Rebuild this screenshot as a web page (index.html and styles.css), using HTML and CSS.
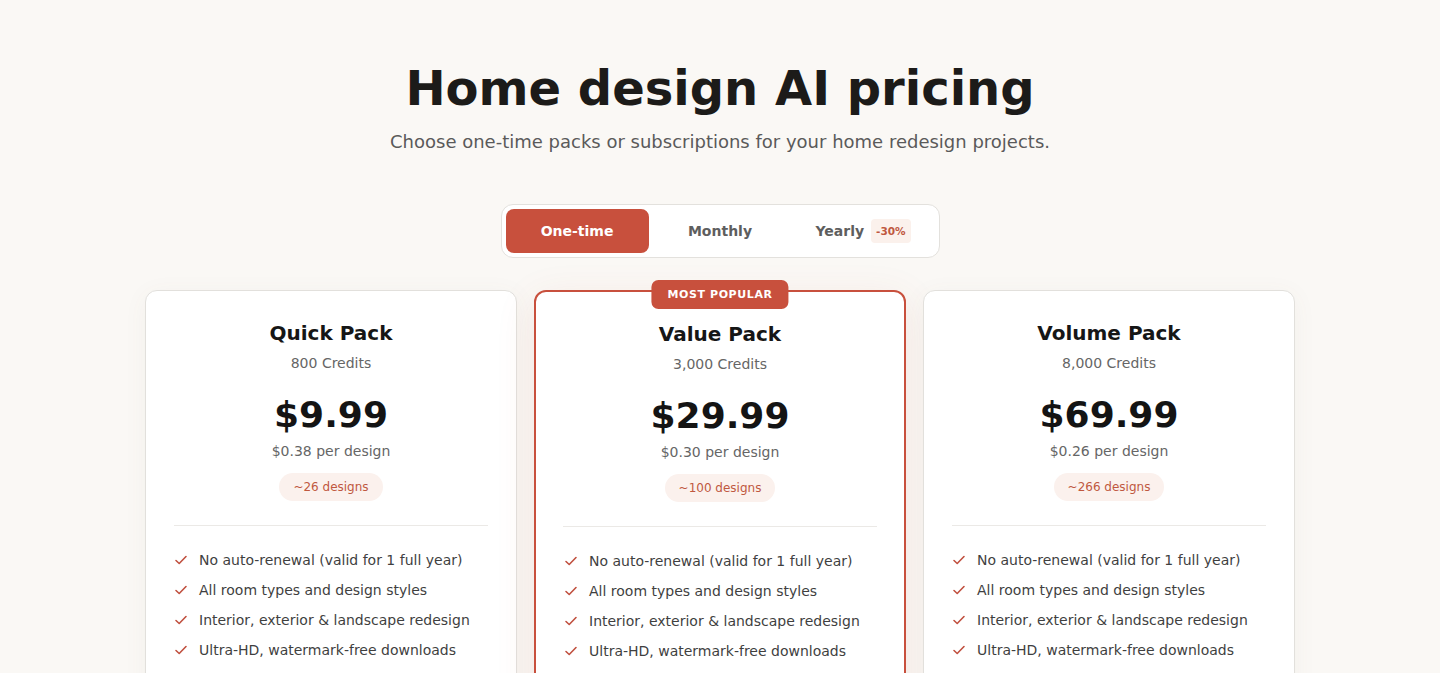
FILE: index.html
```html
<!DOCTYPE html>
<html lang="en">
<head>
<meta charset="utf-8">
<title>Home design AI pricing</title>
<link rel="stylesheet" href="styles.css">
</head>
<body>
<main class="page">
  <h1 class="title">Home design AI pricing</h1>
  <p class="subtitle">Choose one-time packs or subscriptions for your home redesign projects.</p>

  <div class="toggle">
    <button class="tab active">One-time</button>
    <button class="tab">Monthly</button>
    <button class="tab">Yearly <span class="save">-30%</span></button>
  </div>

  <section class="cards">
    <article class="card">
      <h2 class="name">Quick Pack</h2>
      <div class="credits">800 Credits</div>
      <div class="price">$9.99</div>
      <div class="per">$0.38 per design</div>
      <span class="pill">~26 designs</span>
      <hr class="divider">
      <ul class="features">
        <li><svg class="check" viewBox="0 0 14 14"><path d="M2 7.5l3.2 3L12 3.5"/></svg>No auto-renewal (valid for 1 full year)</li>
        <li><svg class="check" viewBox="0 0 14 14"><path d="M2 7.5l3.2 3L12 3.5"/></svg>All room types and design styles</li>
        <li><svg class="check" viewBox="0 0 14 14"><path d="M2 7.5l3.2 3L12 3.5"/></svg>Interior, exterior &amp; landscape redesign</li>
        <li><svg class="check" viewBox="0 0 14 14"><path d="M2 7.5l3.2 3L12 3.5"/></svg>Ultra-HD, watermark-free downloads</li>
      </ul>
    </article>

    <article class="card popular">
      <span class="badge">MOST POPULAR</span>
      <h2 class="name">Value Pack</h2>
      <div class="credits">3,000 Credits</div>
      <div class="price">$29.99</div>
      <div class="per">$0.30 per design</div>
      <span class="pill">~100 designs</span>
      <hr class="divider">
      <ul class="features">
        <li><svg class="check" viewBox="0 0 14 14"><path d="M2 7.5l3.2 3L12 3.5"/></svg>No auto-renewal (valid for 1 full year)</li>
        <li><svg class="check" viewBox="0 0 14 14"><path d="M2 7.5l3.2 3L12 3.5"/></svg>All room types and design styles</li>
        <li><svg class="check" viewBox="0 0 14 14"><path d="M2 7.5l3.2 3L12 3.5"/></svg>Interior, exterior &amp; landscape redesign</li>
        <li><svg class="check" viewBox="0 0 14 14"><path d="M2 7.5l3.2 3L12 3.5"/></svg>Ultra-HD, watermark-free downloads</li>
      </ul>
    </article>

    <article class="card">
      <h2 class="name">Volume Pack</h2>
      <div class="credits">8,000 Credits</div>
      <div class="price">$69.99</div>
      <div class="per">$0.26 per design</div>
      <span class="pill">~266 designs</span>
      <hr class="divider">
      <ul class="features">
        <li><svg class="check" viewBox="0 0 14 14"><path d="M2 7.5l3.2 3L12 3.5"/></svg>No auto-renewal (valid for 1 full year)</li>
        <li><svg class="check" viewBox="0 0 14 14"><path d="M2 7.5l3.2 3L12 3.5"/></svg>All room types and design styles</li>
        <li><svg class="check" viewBox="0 0 14 14"><path d="M2 7.5l3.2 3L12 3.5"/></svg>Interior, exterior &amp; landscape redesign</li>
        <li><svg class="check" viewBox="0 0 14 14"><path d="M2 7.5l3.2 3L12 3.5"/></svg>Ultra-HD, watermark-free downloads</li>
      </ul>
    </article>
  </section>
</main>
</body>
</html>
```

FILE: styles.css
```css
* { box-sizing: border-box; }
html, body {
  margin: 0;
  padding: 0;
  background: #faf8f5;
  font-family: "DejaVu Sans", sans-serif;
  color: #1a1a1a;
  overflow: hidden;
}
.page {
  display: flex;
  flex-direction: column;
  align-items: center;
  padding-top: 59px;
}
.title {
  margin: 0;
  font-size: 48px;
  line-height: 58px;
  font-weight: 700;
  color: #1c1b19;
}
.subtitle {
  margin: 11px 0 0;
  font-size: 18px;
  line-height: 27px;
  color: #5a5a5a;
}
.toggle {
  margin-top: 49px;
  display: grid;
  grid-template-columns: repeat(3, 143px);
  padding: 4px;
  background: #ffffff;
  border: 1px solid #e3e1dd;
  border-radius: 12px;
}
.tab {
  height: 44px;
  border: 0;
  background: transparent;
  border-radius: 8px;
  font-family: inherit;
  font-size: 14px;
  font-weight: 700;
  color: #5e5e5e;
  display: flex;
  align-items: center;
  justify-content: center;
  gap: 7px;
  padding: 0;
}
.tab.active {
  background: #c8503d;
  color: #ffffff;
}
.save {
  display: inline-block;
  background: #fbf1ec;
  color: #c0583f;
  font-size: 10.5px;
  font-weight: 700;
  line-height: 24px;
  padding: 0 5px;
  border-radius: 4px;
}
.cards {
  margin-top: 32px;
  display: grid;
  grid-template-columns: repeat(3, 372px);
  gap: 17px;
  align-items: start;
}
.card {
  position: relative;
  background: #ffffff;
  border: 1px solid #e2e0dc;
  border-radius: 12px;
  padding: 28px 28px 28px;
  display: flex;
  flex-direction: column;
  align-items: center;
  box-shadow: 0 4px 24px rgba(120, 100, 80, 0.05);
  height: 420px;
}
.card.popular {
  border: 2px solid #c8503d;
  padding: 28px 27px 27px;
  box-shadow: 0 10px 40px rgba(200, 80, 61, 0.10);
}
.badge {
  position: absolute;
  top: -12px;
  left: 50%;
  transform: translateX(-50%);
  background: #c8503d;
  color: #ffffff;
  font-size: 11px;
  font-weight: 700;
  letter-spacing: 0.6px;
  line-height: 29px;
  padding: 0 16px;
  border-radius: 7px;
  white-space: nowrap;
}
.name {
  margin: 0;
  font-size: 20px;
  line-height: 28px;
  font-weight: 700;
  color: #161616;
}
.credits {
  margin-top: 6px;
  font-size: 14px;
  line-height: 20px;
  color: #666666;
}
.price {
  margin-top: 20px;
  font-size: 36px;
  line-height: 44px;
  font-weight: 700;
  color: #141414;
}
.per {
  margin-top: 4px;
  font-size: 14px;
  line-height: 20px;
  color: #666666;
}
.pill {
  margin-top: 12px;
  background: #fbf1ed;
  color: #c0583f;
  font-size: 12px;
  line-height: 28px;
  padding: 0 14px;
  border-radius: 14px;
}
.divider {
  align-self: stretch;
  margin: 24px 0 0;
  border: 0;
  border-top: 1px solid #ebe9e6;
}
.features {
  align-self: stretch;
  list-style: none;
  margin: 24px 0 0;
  padding: 0;
  display: flex;
  flex-direction: column;
  gap: 10px;
}
.features li {
  display: flex;
  align-items: center;
  gap: 11px;
  font-size: 14px;
  line-height: 20px;
  color: #3f3f3f;
}
.card.popular .features li { padding-left: 1px; }
.check {
  width: 14px;
  height: 14px;
  flex: none;
  fill: none;
  stroke: #c0503f;
  stroke-width: 1.6;
  stroke-linecap: round;
  stroke-linejoin: round;
}
```
